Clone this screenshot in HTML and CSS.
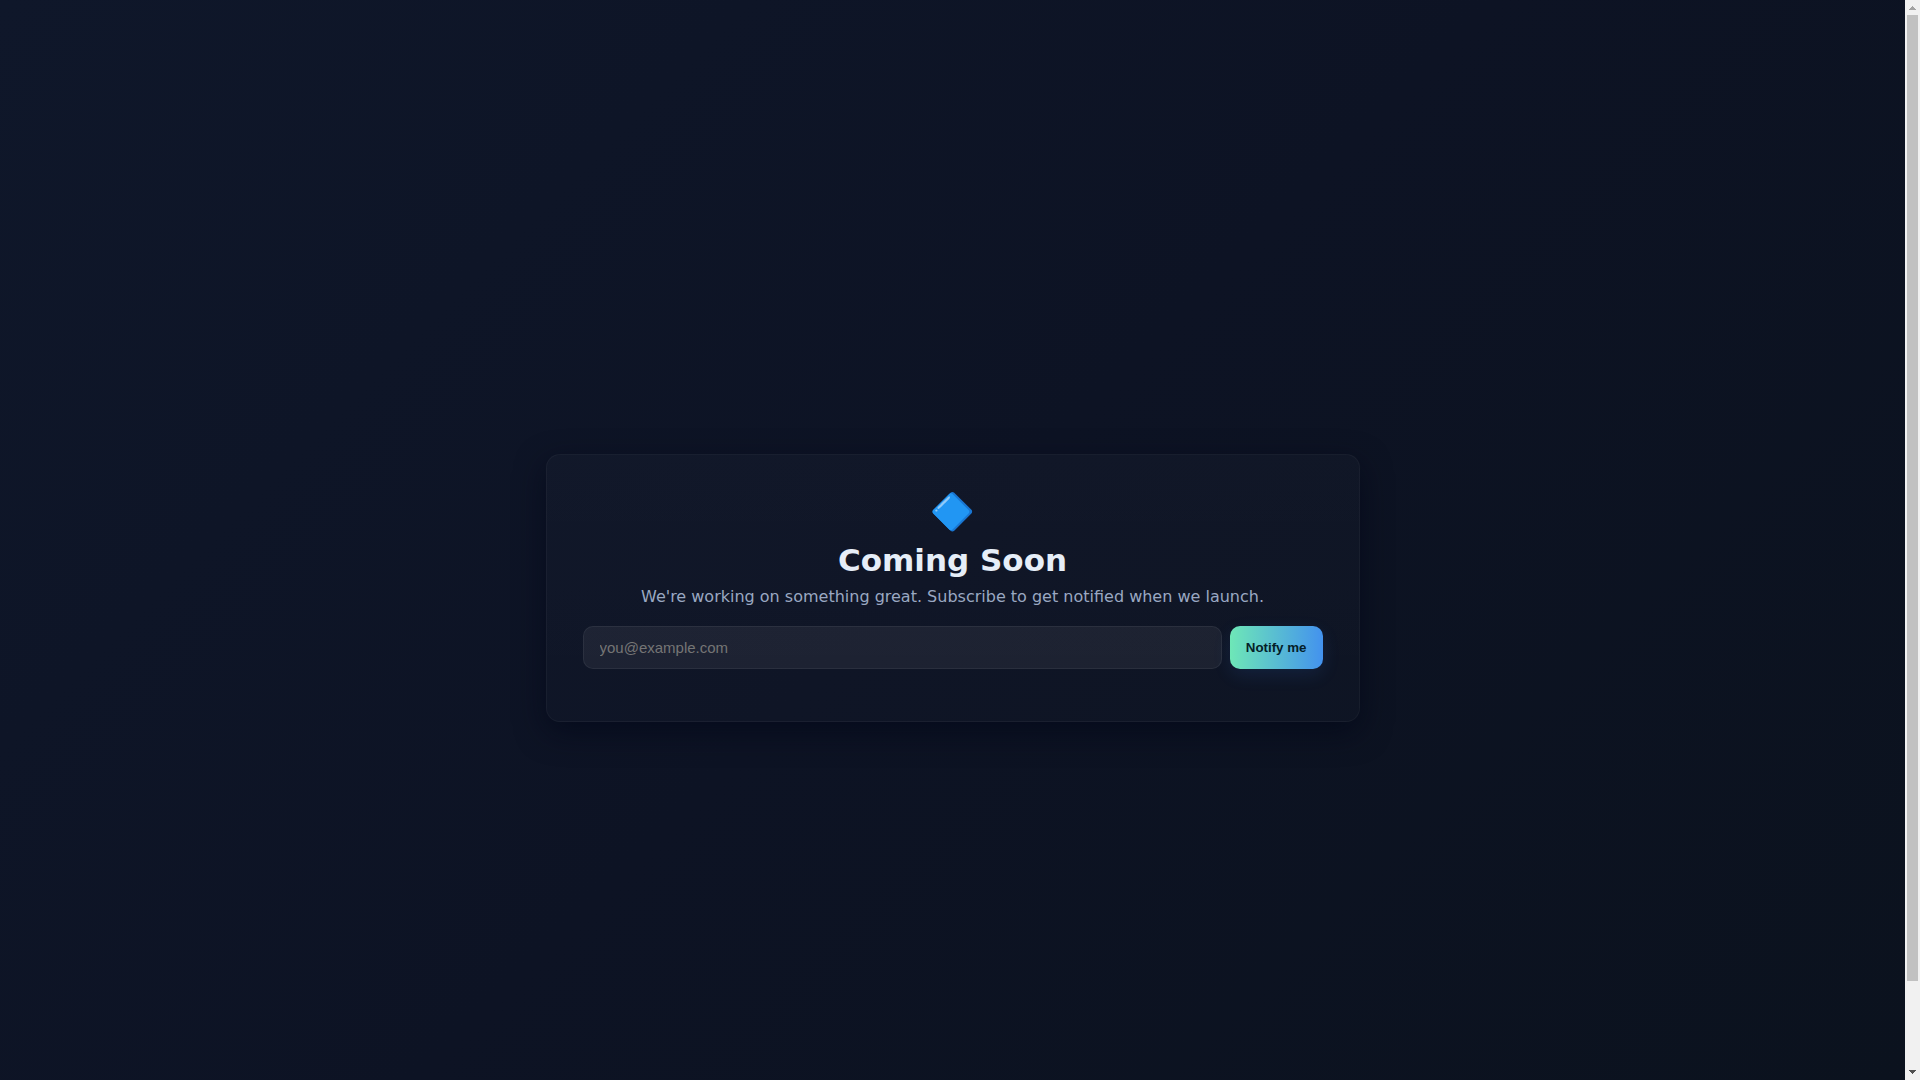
FILE: index.html
```html
<!DOCTYPE html>
<html lang="en">
<head>
  <meta charset="UTF-8">
  <meta name="viewport" content="width=device-width, initial-scale=1">
  <title>Coming Soon</title>
  <link rel="stylesheet" href="styles.css">
</head>
<body>

  <main class="page" id="page">
    <div class="wrap">
      <section class="card">
        <div class="logo">🔷</div>
        <h1>Coming Soon</h1>
        <p class="lead">We're working on something great. Subscribe to get notified when we launch.</p>

        <form class="subscribe" id="subscribeForm">
          <input type="email" id="email" placeholder="you@example.com" aria-label="Email address" required>
          <button type="submit">Notify me</button>
        </form>
        <div class="message" id="message"></div>
      </section>
    </div>
  </main>

  <div class="scrollbar" aria-hidden="true">
    <svg class="arrow up" width="15" height="15" viewBox="0 0 15 15" shape-rendering="crispEdges"><path d="M7 6h1v1h1v1h1v1h1v1H4V9h1V8h1V7h1z"/></svg>
    <div class="track"><div class="thumb"></div></div>
    <svg class="arrow down" width="15" height="15" viewBox="0 0 15 15" shape-rendering="crispEdges"><path d="M4 5h7v1h-1v1H9v1H8v1H7V8H6V7H5V6H4z"/></svg>
  </div>

</body>
</html>
```
FILE: styles.css
```css
body {
  margin: 0;
  display: flex;
  height: 100vh;
  font-family: "DejaVu Sans", sans-serif;
  color: #e6eef8;
}

.page {
  flex: 1;
  overflow-y: auto;
  background: linear-gradient(135deg, #0f172a 0%, #0d1324 50%, #0b121e 100%);
}

.wrap {
  min-height: 100%;
  padding: 48px;
  display: flex;
  align-items: center;
  justify-content: center;
}

.card {
  width: 100%;
  max-width: 740px;
  padding: 36px;
  text-align: center;
  background: linear-gradient(180deg, rgba(255, 255, 255, 0.02), rgba(255, 255, 255, 0.01));
  border: 1px solid rgba(255, 255, 255, 0.04);
  border-radius: 14px;
  box-shadow: 0 10px 30px rgba(2, 6, 23, 0.6);
}

.logo {
  font-size: 36px;
  margin-bottom: 8px;
}

h1 {
  margin: 0 0 8px;
  font-size: 31px;
  line-height: 38px;
}

.lead {
  margin: 0 0 20px;
  color: #9aa8c2;
}

.subscribe {
  display: flex;
  gap: 8px;
}

.subscribe input {
  flex: 1;
  min-width: 0;
  padding: 12px 16px;
  font-family: "Liberation Sans", Arial, sans-serif;
  font-size: 15px;
  color: inherit;
  background: rgba(255, 255, 255, 0.06);
  border: 1px solid rgba(255, 255, 255, 0.06);
  border-radius: 10px;
}

.subscribe button {
  padding: 12px 16px;
  font-family: "Liberation Sans", Arial, sans-serif;
  font-weight: 700;
  color: #042028;
  background: linear-gradient(90deg, #6ee7b7, #4392ee);
  border: none;
  border-radius: 10px;
  box-shadow: 0 6px 18px rgba(59, 130, 246, 0.12);
  cursor: pointer;
}

.message {
  min-height: 16px;
  font-size: 14px;
}

.scrollbar {
  width: 15px;
  display: flex;
  flex-direction: column;
  background: #f1f1f1;
}

.arrow {
  display: block;
}

.arrow.up {
  fill: #a3a3a3;
}

.arrow.down {
  fill: #505050;
}

.track {
  flex: 1;
  padding: 0 2px;
}

.thumb {
  height: 92%;
  background: #c1c1c1;
}
```
